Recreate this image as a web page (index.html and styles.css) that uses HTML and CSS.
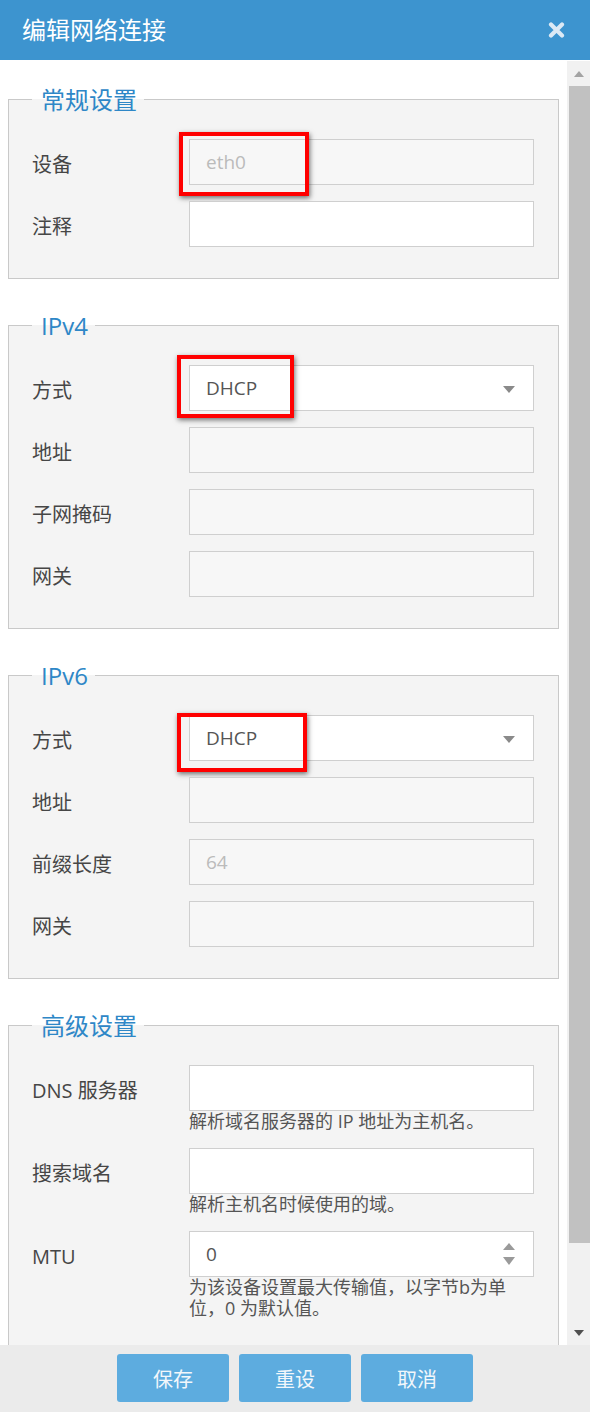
FILE: index.html
```html
<!DOCTYPE html>
<html lang="zh-CN">
<head>
<meta charset="utf-8">
<title>编辑网络连接</title>
<link rel="stylesheet" href="styles.css">
</head>
<body>
<div class="dialog">
  <header class="dlg-header">
    <h1 class="dlg-title">编辑网络连接</h1>
    <button class="close" type="button" aria-label="关闭">
      <svg width="17" height="16" viewBox="0 0 17 16"><path d="M3 2.5 L14 13.5 M14 2.5 L3 13.5" stroke="#dce9f5" stroke-width="4.2" stroke-linecap="round"/></svg>
    </button>
  </header>

  <div class="dlg-body">
    <div class="scroll-content">
      <fieldset class="group">
        <legend>常规设置</legend>
        <div class="rows">
          <div class="row">
            <label class="lbl">设备</label>
            <div class="ctl">
              <div class="field disabled"><input class="inp" type="text" value="eth0" disabled></div>
              <span class="mark mark-1"></span>
            </div>
          </div>
          <div class="row">
            <label class="lbl">注释</label>
            <div class="ctl">
              <div class="field"><input class="inp" type="text" value=""></div>
            </div>
          </div>
        </div>
      </fieldset>

      <fieldset class="group">
        <legend>IPv4</legend>
        <div class="rows">
          <div class="row">
            <label class="lbl">方式</label>
            <div class="ctl">
              <div class="field select"><span class="sel-text">DHCP</span>
                <svg class="caret" width="12" height="7" viewBox="0 0 12 7"><polygon points="0,0 12,0 6,7" fill="#8a8a8a"/></svg>
              </div>
              <span class="mark mark-2"></span>
            </div>
          </div>
          <div class="row">
            <label class="lbl">地址</label>
            <div class="ctl"><div class="field disabled"><input class="inp" type="text" value="" disabled></div></div>
          </div>
          <div class="row">
            <label class="lbl">子网掩码</label>
            <div class="ctl"><div class="field disabled"><input class="inp" type="text" value="" disabled></div></div>
          </div>
          <div class="row">
            <label class="lbl">网关</label>
            <div class="ctl"><div class="field disabled"><input class="inp" type="text" value="" disabled></div></div>
          </div>
        </div>
      </fieldset>

      <fieldset class="group">
        <legend>IPv6</legend>
        <div class="rows">
          <div class="row">
            <label class="lbl">方式</label>
            <div class="ctl">
              <div class="field select"><span class="sel-text">DHCP</span>
                <svg class="caret" width="12" height="7" viewBox="0 0 12 7"><polygon points="0,0 12,0 6,7" fill="#8a8a8a"/></svg>
              </div>
              <span class="mark mark-3"></span>
            </div>
          </div>
          <div class="row">
            <label class="lbl">地址</label>
            <div class="ctl"><div class="field disabled"><input class="inp" type="text" value="" disabled></div></div>
          </div>
          <div class="row">
            <label class="lbl">前缀长度</label>
            <div class="ctl"><div class="field disabled"><input class="inp" type="text" value="64" disabled></div></div>
          </div>
          <div class="row">
            <label class="lbl">网关</label>
            <div class="ctl"><div class="field disabled"><input class="inp" type="text" value="" disabled></div></div>
          </div>
        </div>
      </fieldset>

      <fieldset class="group">
        <legend>高级设置</legend>
        <div class="rows">
          <div class="row">
            <label class="lbl">DNS 服务器</label>
            <div class="ctl">
              <div class="field"><input class="inp" type="text" value=""></div>
              <p class="help">解析域名服务器的 IP 地址为主机名。</p>
            </div>
          </div>
          <div class="row">
            <label class="lbl">搜索域名</label>
            <div class="ctl">
              <div class="field"><input class="inp" type="text" value=""></div>
              <p class="help">解析主机名时候使用的域。</p>
            </div>
          </div>
          <div class="row">
            <label class="lbl">MTU</label>
            <div class="ctl">
              <div class="field"><input class="inp" type="text" value="0">
                <svg class="spin" width="12" height="22" viewBox="0 0 12 22"><polygon points="0,7 6,0 12,7" fill="#9a9a9a"/><polygon points="0,14 12,14 6,22" fill="#9a9a9a"/></svg>
              </div>
              <p class="help">为该设备设置最大传输值，以字节b为单位，0 为默认值。</p>
            </div>
          </div>
        </div>
      </fieldset>
    </div>

    <div class="scrollbar" aria-hidden="true">
      <div class="sb-btn"><svg width="10" height="6" viewBox="0 0 10 6"><polygon points="0,6 5,0 10,6" fill="#a3a3a3"/></svg></div>
      <div class="sb-thumb"></div>
      <div class="sb-track"></div>
      <div class="sb-btn"><svg width="10" height="6" viewBox="0 0 10 6"><polygon points="0,0 10,0 5,6" fill="#505050"/></svg></div>
    </div>
  </div>

  <footer class="dlg-footer">
    <button class="btn" type="button">保存</button>
    <button class="btn" type="button">重设</button>
    <button class="btn" type="button">取消</button>
  </footer>
</div>
</body>
</html>
```

FILE: styles.css
```css
* { box-sizing: border-box; }

html, body {
  margin: 0;
  padding: 0;
  background: #ffffff;
}

body {
  font-family: "Open Sans", "Noto Sans CJK SC", sans-serif;
  color: #4a4a4a;
}

.dialog {
  width: 590px;
  height: 1412px;
  display: flex;
  flex-direction: column;
  background: #ffffff;
}

.dlg-header {
  height: 60px;
  flex: none;
  background: #3d94cf;
  display: flex;
  align-items: center;
  justify-content: space-between;
  padding: 0 25px 0 22px;
}

.dlg-title {
  margin: 0;
  font-size: 24px;
  font-weight: normal;
  line-height: 30px;
  color: #ffffff;
}

.close {
  border: 0;
  padding: 0;
  background: none;
  width: 17px;
  height: 16px;
  display: flex;
}

.dlg-body {
  flex: 1;
  min-height: 0;
  display: flex;
  padding-top: 1px;
}

.scroll-content {
  width: 567px;
  flex: none;
  overflow: hidden;
  padding: 23px 8px 0 8px;
}

.group {
  margin: 0 0 31px;
  padding: 24px 24px 31px 23px;
  border: 1px solid #c9c9c9;
  background: #f4f4f4;
  min-width: 0;
}

.group legend {
  padding: 0 7px 0 9px;
  font-size: 24px;
  line-height: 31px;
  color: #2e87c7;
}

.rows {
  display: flex;
  flex-direction: column;
  gap: 16px;
}

.row {
  display: flex;
  align-items: flex-start;
}

.lbl {
  width: 157px;
  flex: none;
  height: 46px;
  line-height: 52px;
  font-size: 20px;
  color: #464646;
}

.ctl {
  position: relative;
  width: 345px;
  flex: none;
}

.field {
  height: 46px;
  border: 1px solid #cfcfcf;
  background: #ffffff;
  display: flex;
  align-items: center;
  padding: 0 18px 0 16px;
}

.field.disabled {
  background: #f7f7f7;
}

.inp {
  flex: 1;
  min-width: 0;
  border: 0;
  padding: 0;
  margin: 0;
  height: 44px;
  background: transparent;
  font-family: "Open Sans", "Noto Sans CJK SC", sans-serif;
  font-size: 19px;
  color: #555555;
  outline: none;
}

.inp:disabled {
  color: #bbbbbb;
  -webkit-text-fill-color: #bbbbbb;
}

.sel-text {
  flex: 1;
  font-size: 19px;
  color: #555555;
}

.caret { flex: none; margin-top: 2px; }
.spin { flex: none; }

.help {
  margin: 0;
  width: 325px;
  font-size: 18px;
  line-height: 21px;
  color: #555555;
  padding-top: 0;
}

.mark {
  position: absolute;
  border: 4px solid #ff0000;
  box-shadow: 1px 2px 5px rgba(0, 0, 0, 0.55);
  pointer-events: none;
}

.mark-1 { left: -10px; top: -7px; width: 130px; height: 64px; }
.mark-2 { left: -12px; top: -10px; width: 117px; height: 63px; }
.mark-3 { left: -12px; top: -2px; width: 130px; height: 59px; }

.scrollbar {
  width: 23px;
  flex: none;
  background: #f1f1f1;
  display: flex;
  flex-direction: column;
}

.sb-btn {
  height: 25px;
  flex: none;
  display: flex;
  align-items: center;
  justify-content: center;
  padding-left: 1px;
}

.sb-thumb {
  height: 1157px;
  flex: none;
  margin-left: 2px;
  background: #c1c1c1;
}

.sb-track { flex: 1; }

.dlg-footer {
  height: 67px;
  flex: none;
  background: #ebebeb;
  display: flex;
  justify-content: center;
  align-items: flex-start;
  gap: 10px;
  padding-top: 9px;
}

.btn {
  width: 112px;
  height: 48px;
  border: 0;
  border-radius: 3px;
  background: #5dacdf;
  color: #f2f7fb;
  font-family: "Open Sans", "Noto Sans CJK SC", sans-serif;
  font-size: 20px;
}
```
